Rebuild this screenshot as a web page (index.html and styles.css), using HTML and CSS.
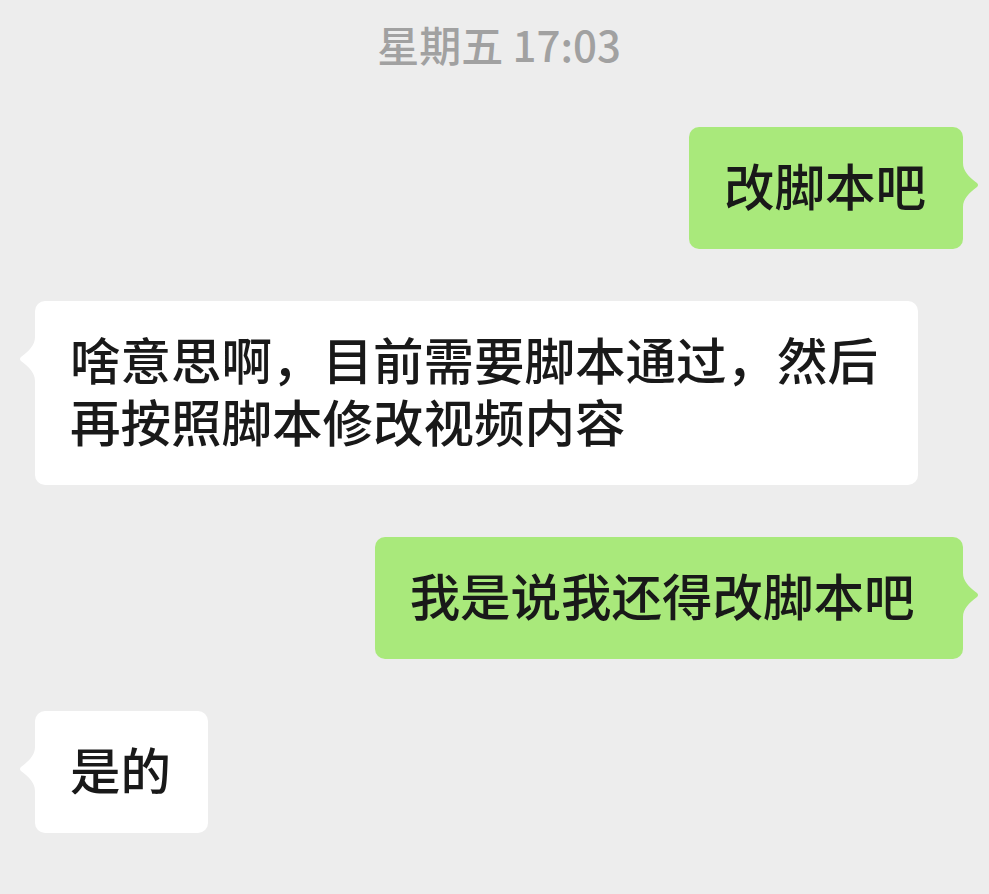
FILE: index.html
```html
<!DOCTYPE html>
<html lang="zh-CN">
<head>
  <meta charset="UTF-8">
  <meta name="viewport" content="width=device-width, initial-scale=1.0">
  <title>聊天</title>
  <link rel="stylesheet" href="styles.css">
</head>
<body>
  <div class="chat">
    <div class="time">星期五 17:03</div>

    <div class="row right">
      <div class="bubble green">
        改脚本吧
        <svg class="tail" viewBox="0 0 16 44"><path d="M0 0 C0 8 6 14 14 20 Q16 22 14 24 C6 30 0 36 0 44 Z"/></svg>
      </div>
    </div>

    <div class="row left">
      <div class="bubble white">
        啥意思啊，目前需要脚本通过，然后再按照脚本修改视频内容
        <svg class="tail" viewBox="0 0 16 44"><path d="M16 0 C16 8 10 14 2 20 Q0 22 2 24 C10 30 16 36 16 44 Z"/></svg>
      </div>
    </div>

    <div class="row right">
      <div class="bubble green">
        我是说我还得改脚本吧&nbsp;
        <svg class="tail" viewBox="0 0 16 44"><path d="M0 0 C0 8 6 14 14 20 Q16 22 14 24 C6 30 0 36 0 44 Z"/></svg>
      </div>
    </div>

    <div class="row left">
      <div class="bubble white">
        是的
        <svg class="tail" viewBox="0 0 16 44"><path d="M16 0 C16 8 10 14 2 20 Q0 22 2 24 C10 30 16 36 16 44 Z"/></svg>
      </div>
    </div>
  </div>
</body>
</html>
```

FILE: styles.css
```css
body {
  margin: 0;
  background-color: #ededed;
  font-family: "Noto Sans CJK SC", "Noto Sans", sans-serif;
}

.chat {
  display: flex;
  flex-direction: column;
  gap: 52px;
  padding: 19px 26px 0 35px;
}

.time {
  text-align: center;
  font-size: 42px;
  line-height: 50px;
  font-weight: 500;
  color: #a1a1a1;
  margin-bottom: 6px;
}

.row {
  display: flex;
}

.row.right {
  justify-content: flex-end;
}

.row.left {
  justify-content: flex-start;
}

.bubble {
  position: relative;
  max-width: 883px;
  box-sizing: border-box;
  padding: 26px 37px 34px 35px;
  border-radius: 10px;
  font-size: 50.5px;
  line-height: 62px;
  font-weight: 500;
  color: #191919;
}

.bubble.green {
  background-color: #a9e97b;
}

.bubble.white {
  background-color: #ffffff;
}

.tail {
  position: absolute;
  top: 36px;
  width: 16px;
  height: 44px;
}

.green .tail {
  right: -16px;
  fill: #a9e97b;
}

.white .tail {
  left: -16px;
  fill: #ffffff;
}
```
